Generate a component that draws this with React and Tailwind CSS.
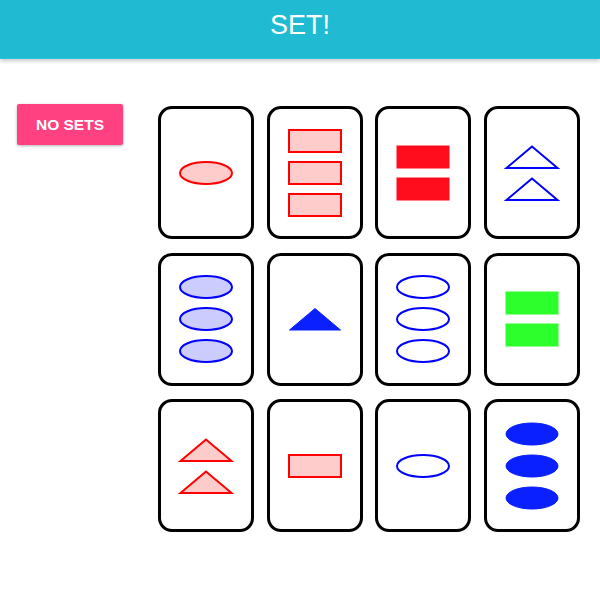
import React from 'react'

const COLORS = {
  red: { stroke: '#ff0000', light: '#ffcccc', solid: '#ff0d1d' },
  blue: { stroke: '#0000ff', light: '#ccccff', solid: '#0a20ff' },
  green: { stroke: '#00ff00', light: '#ccffcc', solid: '#2cff2c' },
}

const cards = [
  { n: 1, color: 'red', fill: 'striped', shape: 'oval' },
  { n: 3, color: 'red', fill: 'striped', shape: 'rect' },
  { n: 2, color: 'red', fill: 'solid', shape: 'rect' },
  { n: 2, color: 'blue', fill: 'open', shape: 'triangle' },
  { n: 3, color: 'blue', fill: 'striped', shape: 'oval' },
  { n: 1, color: 'blue', fill: 'solid', shape: 'triangle' },
  { n: 3, color: 'blue', fill: 'open', shape: 'oval' },
  { n: 2, color: 'green', fill: 'solid', shape: 'rect' },
  { n: 2, color: 'red', fill: 'striped', shape: 'triangle' },
  { n: 1, color: 'red', fill: 'striped', shape: 'rect' },
  { n: 1, color: 'blue', fill: 'open', shape: 'oval' },
  { n: 3, color: 'blue', fill: 'solid', shape: 'oval' },
]

const Shape = ({ shape, color, fill }) => {
  const c = COLORS[color]
  const solid = fill === 'solid'
  const props = {
    fill: solid ? c.solid : fill === 'striped' ? c.light : 'none',
    stroke: solid ? c.solid : c.stroke,
    strokeWidth: solid ? 1 : 2,
  }

  return (
    <svg width="54" height="24" viewBox="0 0 54 24" className="overflow-visible">
      {shape === 'oval' && <ellipse cx="27" cy="12" rx="26" ry="11" {...props} />}
      {shape === 'rect' && <rect x="1" y="1" width="52" height="22" {...props} />}
      {shape === 'triangle' && <polygon points="27,1.5 1.5,23 52.5,23" strokeLinejoin="miter" {...props} />}
    </svg>
  )
}

const Card = ({ card }) => (
  <div className="w-[96px] h-[133px] bg-white border-[3px] border-black rounded-[14px] flex flex-col items-center justify-center gap-[8px]">
    {Array.from({ length: card.n }).map((_, i) => (
      <Shape key={i} shape={card.shape} color={card.color} fill={card.fill} />
    ))}
  </div>
)

export default function App() {
  return (
    <div className="min-h-[600px] bg-white font-['Liberation_Sans',Arial,sans-serif]">
      <header className="h-[59px] bg-[#20bbd3] border-b border-[#2ac4db] shadow-[0_2px_4px_rgba(0,0,0,0.22)] flex items-center justify-center">
        <h1 className="text-white text-[27px] leading-none -mt-[8px]">SET!</h1>
      </header>

      <div className="flex items-start pl-[17px] pt-[47px]">
        <button className="w-[106px] h-[41px] bg-[#ff4081] text-white text-[15.5px] font-bold rounded-[2px] shadow-[0_1px_3px_rgba(0,0,0,0.3)] mt-[-2px]">
          NO SETS
        </button>

        <div className="ml-[35px] grid grid-cols-[repeat(4,96px)] gap-x-[12.7px] gap-y-[13.5px]">
          {cards.map((card, i) => (
            <Card key={i} card={card} />
          ))}
        </div>
      </div>
    </div>
  )
}
